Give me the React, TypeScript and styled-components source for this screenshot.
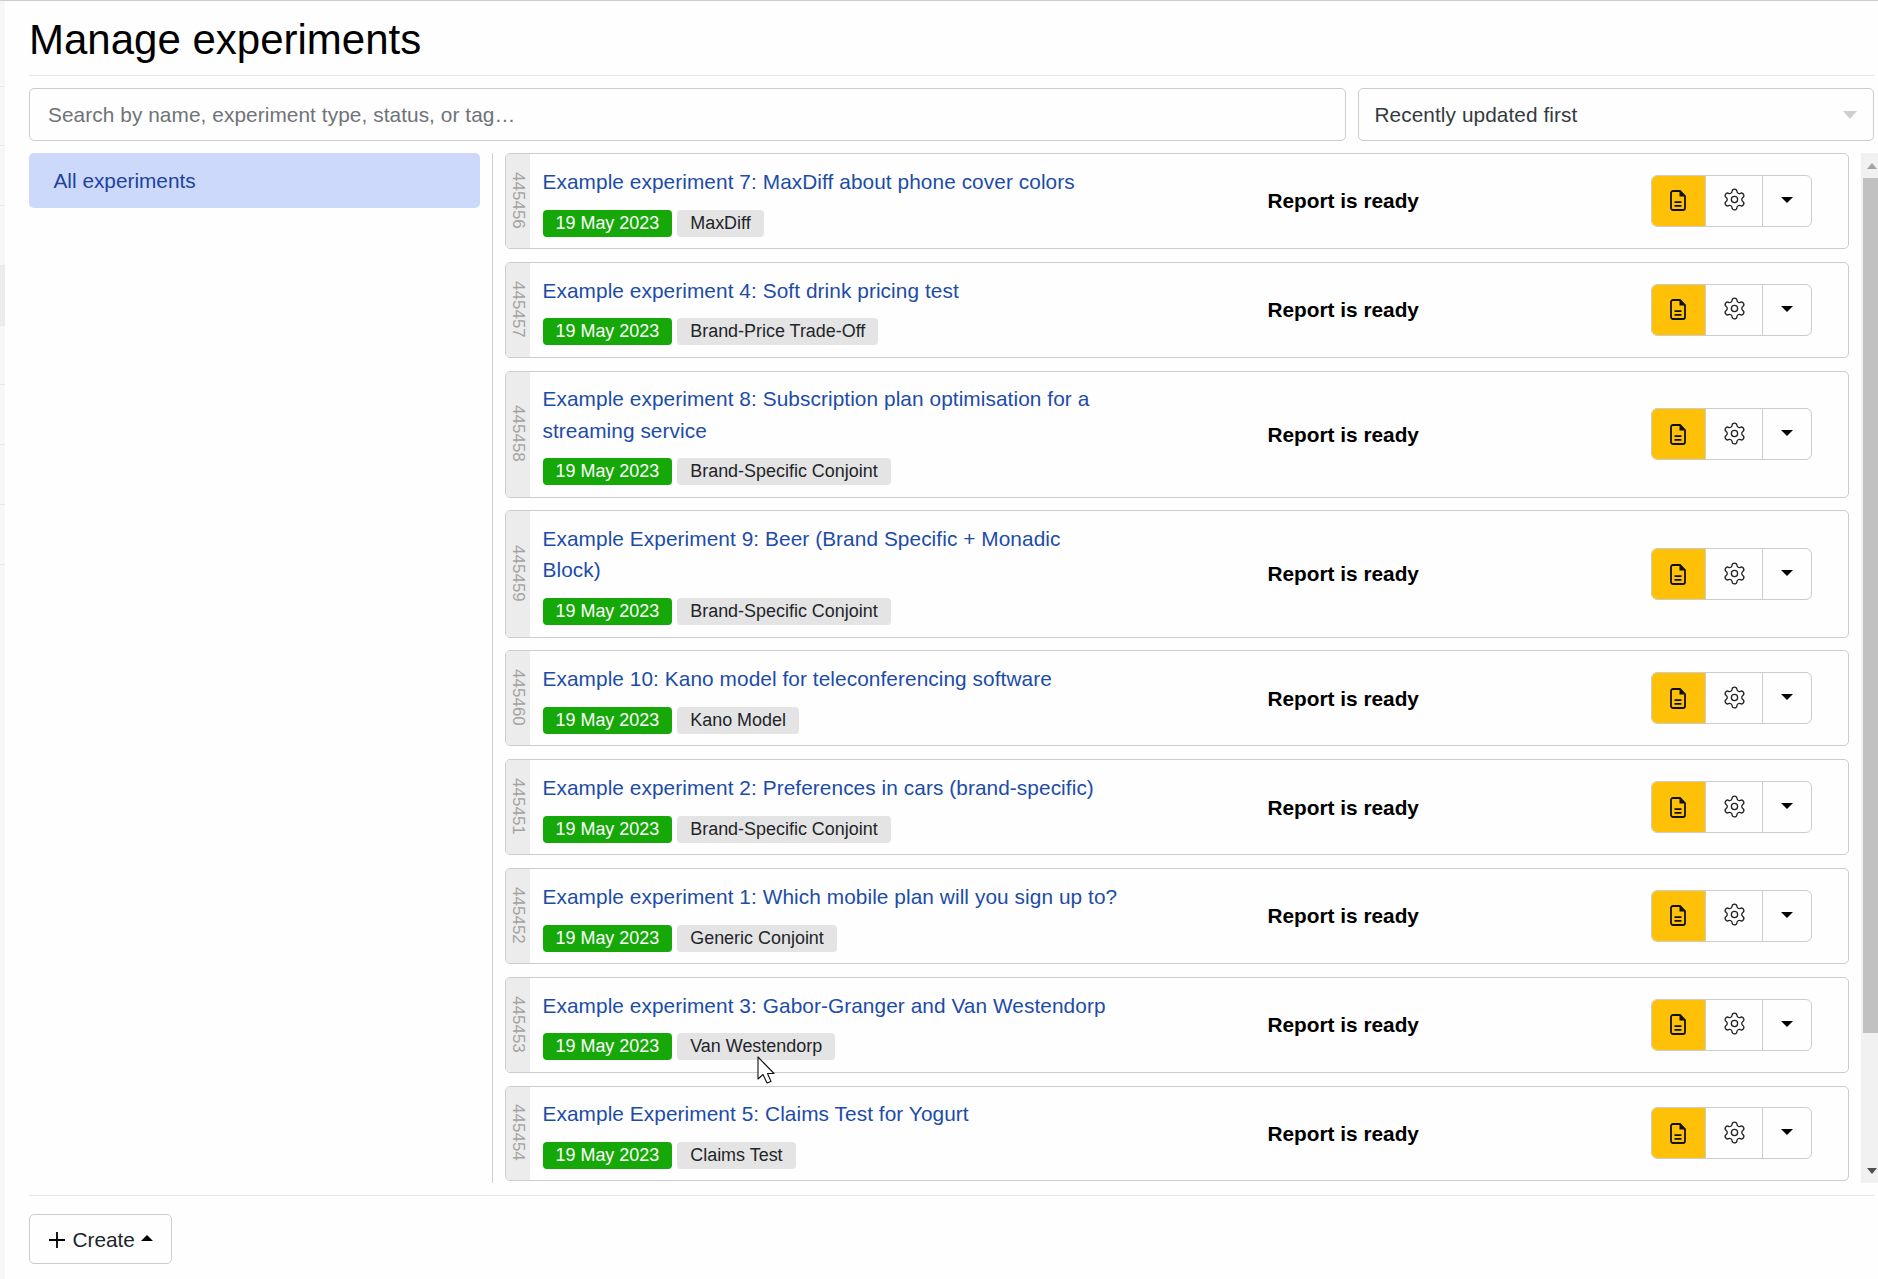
import styled, { createGlobalStyle } from 'styled-components';
import { Settings } from 'lucide-react';

const BORDER = '#cccccc';
const DIVIDER = '#e6e6e6';

const experiments = [
  { id: '445456', title: 'Example experiment 7: MaxDiff about phone cover colors', tag: 'MaxDiff' },
  { id: '445457', title: 'Example experiment 4: Soft drink pricing test', tag: 'Brand-Price Trade-Off' },
  { id: '445458', title: 'Example experiment 8: Subscription plan optimisation for a streaming service', tag: 'Brand-Specific Conjoint' },
  { id: '445459', title: 'Example Experiment 9: Beer (Brand Specific + Monadic Block)', tag: 'Brand-Specific Conjoint' },
  { id: '445460', title: 'Example 10: Kano model for teleconferencing software', tag: 'Kano Model' },
  { id: '445451', title: 'Example experiment 2: Preferences in cars (brand-specific)', tag: 'Brand-Specific Conjoint' },
  { id: '445452', title: 'Example experiment 1: Which mobile plan will you sign up to?', tag: 'Generic Conjoint' },
  { id: '445453', title: 'Example experiment 3: Gabor-Granger and Van Westendorp', tag: 'Van Westendorp' },
  { id: '445454', title: 'Example Experiment 5: Claims Test for Yogurt', tag: 'Claims Test' },
];

const railRows = [86, 59, 60, 60, 60, 59, 60, 60, 60];

const GlobalStyle = createGlobalStyle`
  html, body {
    margin: 0;
    padding: 0;
    height: 100%;
    overflow: hidden;
    background-color: #fefefe;
    font-family: 'Liberation Sans', Arial, sans-serif;
    font-size: 20.8px;
    line-height: 1.5;
    letter-spacing: 0.08px;
    color: #212529;
  }
  * {
    box-sizing: border-box;
  }
`;

const Page = styled.div`
  position: relative;
  display: flex;
  width: 1878px;
  height: 1279px;
  border-top: 1px solid ${BORDER};
  overflow: hidden;
`;

const Rail = styled.div`
  flex: 0 0 5px;
  background-color: #f6f8f8;
`;

const RailRow = styled.div<{ $h: number; $shaded?: boolean }>`
  height: ${(p) => p.$h}px;
  border-bottom: 1px solid #e8e8e8;
  background-color: ${(p) => (p.$shaded ? '#ececec' : 'transparent')};
`;

const Main = styled.main`
  flex: 1;
  min-width: 0;
  padding: 0 4px 0 24px;
`;

const Header = styled.header`
  height: 75px;
  border-bottom: 1px solid ${DIVIDER};
`;

const Title = styled.h1`
  margin: 0;
  padding-top: 12px;
  font-size: 42px;
  font-weight: 400;
  line-height: 53px;
  letter-spacing: 0;
  color: #000;
`;

const Controls = styled.div`
  display: flex;
  gap: 12px;
  margin-top: 12px;
`;

const SearchInput = styled.input`
  flex: 0 0 1317px;
  height: 53px;
  padding: 0 18px;
  border: 1px solid ${BORDER};
  border-radius: 5px;
  background: transparent;
  font: inherit;
  letter-spacing: inherit;
  color: #212529;
  outline: none;

  &::placeholder {
    color: #6f7378;
    opacity: 1;
  }
`;

const SortSelect = styled.div`
  flex: 1;
  display: flex;
  align-items: center;
  justify-content: space-between;
  height: 53px;
  padding: 0 16px 0 15.5px;
  border: 1px solid ${BORDER};
  border-radius: 5px;
  color: #343a40;
`;

const SortArrow = styled.span`
  width: 0;
  height: 0;
  border-left: 7px solid transparent;
  border-right: 7px solid transparent;
  border-top: 8px solid #cfcfcf;
`;

const Body = styled.div`
  display: flex;
  height: 1030px;
  margin-top: 12px;
  margin-right: -4px;
`;

const Sidebar = styled.nav`
  flex: 0 0 464px;
  padding-right: 12px;
  border-right: 1px solid ${BORDER};
`;

const SidebarItem = styled.div`
  height: 55px;
  padding: 11.5px 24.5px;
  border-radius: 5px;
  background-color: #cdd9fb;
  color: #1e429f;
  letter-spacing: 0;
`;

const List = styled.div`
  flex: 1;
  min-width: 0;
  display: flex;
  flex-direction: column;
  gap: 12.8px;
  padding: 0 12.5px 0 12px;
  overflow: hidden;
`;

const Card = styled.article`
  flex: none;
  display: flex;
  border: 1px solid ${BORDER};
  border-radius: 5px;
  overflow: hidden;
`;

const IdGutter = styled.div`
  flex: 0 0 24px;
  display: flex;
  align-items: center;
  justify-content: center;
  padding-bottom: 1.5px;
  background-color: #ececec;
  writing-mode: vertical-rl;
  font-size: 16.9px;
  line-height: 1;
  color: #a3a3a3;
`;

const CardBody = styled.div`
  flex: 0 0 592.5px;
  padding: 11.8px 1.5px 11.3px 12.5px;
`;

const ExperimentLink = styled.a`
  display: block;
  color: #1c4ca8;
  text-decoration: none;
`;

const BadgeRow = styled.div`
  display: flex;
  gap: 5px;
  margin-top: 12.7px;
`;

const Badge = styled.span<{ $date?: boolean }>`
  height: 27px;
  padding: 0 13px;
  border-radius: 4px;
  background-color: ${(p) => (p.$date ? '#16a808' : '#e4e4e4')};
  color: ${(p) => (p.$date ? '#fff' : '#212529')};
  font-size: 17.94px;
  line-height: 27px;
  letter-spacing: 0;
`;

const Status = styled.div`
  flex: 1;
  align-self: center;
  padding-left: 145px;
  font-weight: 700;
  letter-spacing: 0;
  color: #000;
`;

const ActionGroup = styled.div`
  flex: none;
  align-self: center;
  display: flex;
  height: 52px;
  margin-right: 35.5px;
  border: 1px solid ${BORDER};
  border-radius: 6px;
  overflow: hidden;
`;

const ActionButton = styled.button<{ $w: number; $primary?: boolean }>`
  display: flex;
  align-items: center;
  justify-content: center;
  width: ${(p) => p.$w}px;
  margin: ${(p) => (p.$primary ? '-1px 0 -1px -1px' : '0')};
  padding: 0;
  border: 0;
  border-left: ${(p) => (p.$primary ? '0' : `1px solid ${BORDER}`)};
  background-color: ${(p) => (p.$primary ? '#ffc107' : 'transparent')};
  color: #222;
`;

const GearIcon = styled(Settings)`
  margin-top: -2px;
`;

const CaretDown = styled.span`
  width: 0;
  height: 0;
  border-left: 6px solid transparent;
  border-right: 6px solid transparent;
  border-top: 6px solid #000;
  margin-top: -2px;
`;

const ScrollBar = styled.div`
  flex: 0 0 17px;
  display: flex;
  flex-direction: column;
  background-color: #f1f1f1;
`;

const ScrollCap = styled.div`
  flex: 0 0 25px;
  display: flex;
  justify-content: flex-end;
  align-items: center;
  padding-right: 1px;
`;

const ScrollArrow = styled.span<{ $up?: boolean }>`
  width: 0;
  height: 0;
  border-left: 5px solid transparent;
  border-right: 5px solid transparent;
  ${(p) => (p.$up ? 'border-bottom: 6px solid #a3a3a3;' : 'border-top: 6px solid #505050;')}
`;

const ScrollThumb = styled.div`
  flex: 0 0 855px;
  margin-left: 2px;
  background-color: #c1c1c1;
`;

const ScrollRest = styled.div`
  flex: 1;
`;

const Footer = styled.footer`
  margin-top: 12px;
  padding-top: 18px;
  border-top: 1px solid ${DIVIDER};
`;

const CreateButton = styled.button`
  display: flex;
  align-items: center;
  width: 143px;
  height: 50px;
  padding: 1px 0 0 18px;
  border: 1px solid ${BORDER};
  border-radius: 5px;
  background: transparent;
  font: inherit;
  letter-spacing: 0;
  color: #212529;
`;

const PlusIcon = styled.svg`
  flex: none;
  margin-right: 6.5px;
`;

const CaretUp = styled.span`
  width: 0;
  height: 0;
  margin: -3px 0 0 6px;
  border-left: 6px solid transparent;
  border-right: 6px solid transparent;
  border-bottom: 6px solid #000;
`;

const Cursor = styled.svg`
  position: absolute;
  left: 757px;
  top: 1055px;
`;

function FileIcon() {
  return (
    <svg width="16" height="21" viewBox="0 0 16 21" fill="none">
      <path
        d="M3 1H10L15 6V18A2 2 0 0 1 13 20H3A2 2 0 0 1 1 18V3A2 2 0 0 1 3 1Z"
        stroke="#111"
        strokeWidth="1.8"
      />
      <path d="M9.5 1L15 6.5H9.5Z" fill="#111" />
      <path d="M4.5 12.2H11.5M4.5 15.9H11.5" stroke="#111" strokeWidth="1.7" />
    </svg>
  );
}

export default function App() {
  return (
    <>
      <GlobalStyle />
      <Page>
        <Rail>
          {railRows.map((h, i) => (
            <RailRow key={i} $h={h} $shaded={i === 4} />
          ))}
        </Rail>
        <Main>
          <Header>
            <Title>Manage experiments</Title>
          </Header>
          <Controls>
            <SearchInput placeholder="Search by name, experiment type, status, or tag…" />
            <SortSelect>
              Recently updated first
              <SortArrow />
            </SortSelect>
          </Controls>
          <Body>
            <Sidebar>
              <SidebarItem>All experiments</SidebarItem>
            </Sidebar>
            <List>
              {experiments.map((e) => (
                <Card key={e.id}>
                  <IdGutter>{e.id}</IdGutter>
                  <CardBody>
                    <ExperimentLink>{e.title}</ExperimentLink>
                    <BadgeRow>
                      <Badge $date>19 May 2023</Badge>
                      <Badge>{e.tag}</Badge>
                    </BadgeRow>
                  </CardBody>
                  <Status>Report is ready</Status>
                  <ActionGroup>
                    <ActionButton $w={54} $primary>
                      <FileIcon />
                    </ActionButton>
                    <ActionButton $w={57}>
                      <GearIcon size={25} strokeWidth={1.25} />
                    </ActionButton>
                    <ActionButton $w={49}>
                      <CaretDown />
                    </ActionButton>
                  </ActionGroup>
                </Card>
              ))}
            </List>
            <ScrollBar>
              <ScrollCap>
                <ScrollArrow $up />
              </ScrollCap>
              <ScrollThumb />
              <ScrollRest />
              <ScrollCap>
                <ScrollArrow />
              </ScrollCap>
            </ScrollBar>
          </Body>
          <Footer>
            <CreateButton>
              <PlusIcon width="18" height="18" viewBox="0 0 18 18">
                <path d="M9 1V17M1 9H17" stroke="#000" strokeWidth="1.8" />
              </PlusIcon>
              Create
              <CaretUp />
            </CreateButton>
          </Footer>
        </Main>
        <Cursor width="18" height="29" viewBox="0 0 18 29">
          <path
            d="M1 1V23L6 18.5L10 27L14 25.5L10.5 17.5H17Z"
            fill="#fff"
            stroke="#111"
            strokeWidth="1.1"
            strokeLinejoin="round"
          />
        </Cursor>
      </Page>
    </>
  );
}
